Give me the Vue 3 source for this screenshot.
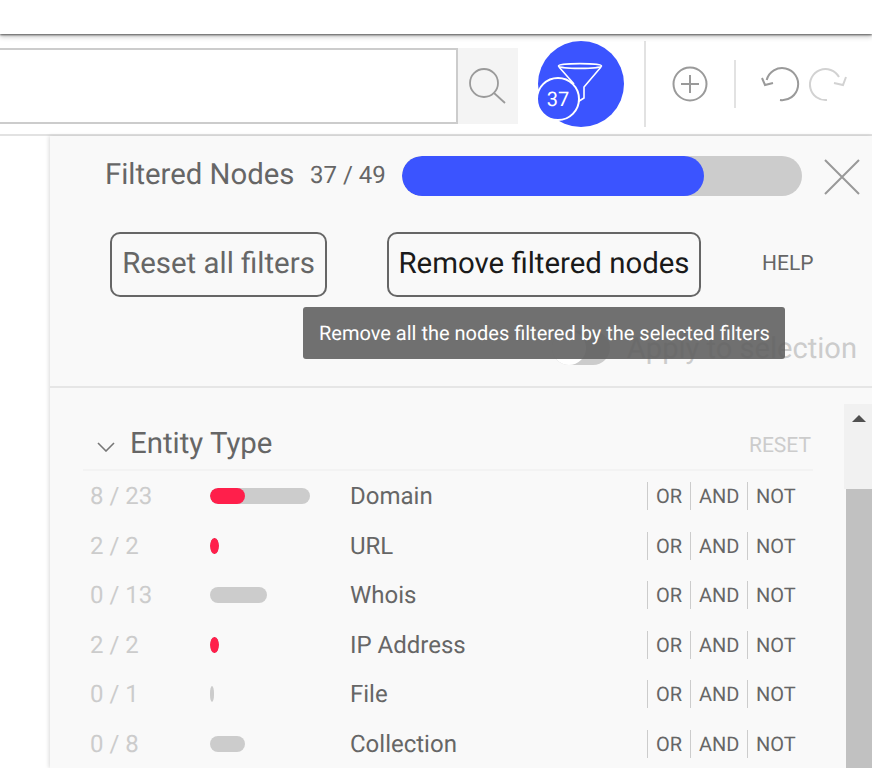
<script setup>
const rows = [
  { count: '8 / 23', total: 23, red: 8, label: 'Domain' },
  { count: '2 / 2', total: 2, red: 2, label: 'URL' },
  { count: '0 / 13', total: 13, red: 0, label: 'Whois' },
  { count: '2 / 2', total: 2, red: 2, label: 'IP Address' },
  { count: '0 / 1', total: 1, red: 0, label: 'File' },
  { count: '0 / 8', total: 8, red: 0, label: 'Collection' }
]
const unit = 100 / 23
</script>

<template>
  <div class="page">
    <div class="topbar"></div>
    <div class="toolbar">
      <div class="search-input"></div>
      <div class="search-btn">
        <svg width="40" height="40" viewBox="0 0 40 40" fill="none" stroke="#9a9a9a" stroke-width="1.8">
          <circle cx="16" cy="17" r="14" />
          <path d="M26 27 L37 37" />
        </svg>
      </div>
      <div class="filter-btn">
        <svg class="funnel" width="48" height="44" viewBox="0 0 48 44" fill="none" stroke="#fff" stroke-width="1.6" stroke-linejoin="round">
          <ellipse cx="24" cy="4" rx="21.5" ry="2.4" />
          <path d="M3 5 L18 22 M45 5 L28 25 L28 36 L20 41" />
        </svg>
        <div class="badge">37</div>
      </div>
      <div class="vline tall"></div>
      <svg class="plus" width="36" height="36" viewBox="0 0 36 36" fill="none" stroke="#9a9a9a" stroke-width="2">
        <circle cx="18" cy="18" r="16.5" />
        <path d="M18 9 V27 M9 18 H27" />
      </svg>
      <div class="vline short"></div>
      <svg class="undo" width="44" height="44" viewBox="0 0 44 44" fill="none" stroke="#9a9a9a" stroke-width="2">
        <path d="M6.7 18 A16 16 0 1 1 20 38" />
        <path d="M2 16 L5 23 L13 21" />
      </svg>
      <svg class="redo" width="44" height="44" viewBox="0 0 44 44" fill="none" stroke="#d2d2d2" stroke-width="2">
        <path d="M33 15 A15.5 15.5 0 1 0 21 38" />
        <path d="M40 15 L37 23 L28 21" />
      </svg>
    </div>

    <div class="panel">
      <div class="summary">
        <span class="title">Filtered Nodes</span>
        <span class="ratio">37 / 49</span>
        <div class="progress"><div class="progress-fill"></div></div>
        <svg class="close" width="36" height="36" viewBox="0 0 36 36" fill="none" stroke="#999" stroke-width="2">
          <path d="M1 1 L35 35 M35 1 L1 35" />
        </svg>
      </div>
      <div class="actions">
        <div class="btn reset">Reset all filters</div>
        <div class="btn remove">Remove filtered nodes</div>
        <span class="help">HELP</span>
      </div>
      <div class="apply">
        <div class="toggle"><div class="thumb"></div></div>
        <span class="apply-text">Apply to selection</span>
      </div>
      <div class="tooltip">Remove all the nodes filtered by the selected filters</div>

      <div class="lower">
        <div class="list">
          <div class="list-head">
            <svg class="chev" width="18" height="10" viewBox="0 0 18 10" fill="none" stroke="#777" stroke-width="1.6">
              <path d="M1 1 L9 9 L17 1" />
            </svg>
            <span class="list-title">Entity Type</span>
            <span class="list-reset">RESET</span>
          </div>
          <div v-for="row in rows" :key="row.label" class="row">
            <span class="count">{{ row.count }}</span>
            <div class="bar-cell">
              <div class="bar" :style="{ width: row.total * unit + 'px' }">
                <div class="bar-fill" :style="{ width: row.red * unit + 'px' }"></div>
              </div>
            </div>
            <span class="label">{{ row.label }}</span>
            <div class="ops">
              <span class="op op-or">OR</span>
              <span class="op op-and">AND</span>
              <span class="op op-not">NOT</span>
            </div>
          </div>
        </div>
        <div class="scrollbar">
          <div class="scroll-top"><div class="arrow"></div></div>
          <div class="scroll-thumb"></div>
        </div>
      </div>
    </div>
  </div>
</template>

<style scoped>
.page {
  height: 768px;
  overflow: hidden;
  background: #fff;
  font-family: Roboto, "Liberation Sans", sans-serif;
  text-rendering: geometricPrecision;
  display: flex;
  flex-direction: column;
}
.topbar {
  height: 34px;
  flex: none;
  background: #fff;
  box-shadow: 0 1px 2px rgba(0, 0, 0, 0.6), 0 3px 5px rgba(0, 0, 0, 0.2);
  position: relative;
  z-index: 1;
}
.toolbar {
  height: 100px;
  flex: none;
  display: flex;
  align-items: center;
  border-bottom: 2px solid #e2e2e2;
}
.search-input {
  width: 458px;
  height: 76px;
  box-sizing: border-box;
  border: 2px solid #ccc;
  border-left: none;
  background: #fff;
  margin-top: 4px;
}
.search-btn {
  width: 60px;
  height: 76px;
  margin-top: 4px;
  background: #f4f4f4;
  display: flex;
  align-items: center;
  justify-content: center;
}
.filter-btn {
  width: 86px;
  height: 86px;
  margin-left: 20px;
  position: relative;
  overflow: hidden;
}
.filter-btn::before {
  content: "";
  position: absolute;
  inset: 0;
  border-radius: 50%;
  background: #3b54ff;
}
.funnel {
  position: absolute;
  left: 18px;
  top: 21px;
}
.badge {
  position: absolute;
  left: -2px;
  top: 36px;
  width: 44px;
  height: 44px;
  box-sizing: border-box;
  border: 2px solid #fff;
  border-radius: 50%;
  background: #3b54ff;
  color: #fff;
  font-size: 20px;
  display: flex;
  align-items: center;
  justify-content: center;
}
.vline {
  width: 2px;
  background: #e2e2e2;
}
.tall {
  height: 86px;
  margin-left: 20px;
}
.short {
  height: 48px;
  margin-left: 26px;
}
.plus {
  margin-left: 26px;
}
.undo {
  margin-left: 24px;
}
.redo {
  margin-left: 2px;
}
.panel {
  flex: 1;
  min-height: 0;
  margin-left: 50px;
  background: #f9f9f9;
  box-shadow: -1px 0 4px rgba(0, 0, 0, 0.15);
  position: relative;
  display: flex;
  flex-direction: column;
}
.summary {
  height: 40px;
  margin-top: 20px;
  padding-left: 55px;
  display: flex;
  align-items: center;
  color: #666;
}
.title {
  font-size: 29.3px;
  width: 205px;
  flex: none;
  padding-bottom: 2px;
}
.ratio {
  font-size: 24px;
  width: 92px;
  flex: none;
  padding-bottom: 2px;
}
.progress {
  width: 400px;
  height: 40px;
  flex: none;
  border-radius: 20px;
  background: #ccc;
  overflow: hidden;
}
.progress-fill {
  width: 302px;
  height: 100%;
  border-radius: 20px;
  background: #3b54ff;
}
.close {
  margin-left: 22px;
  margin-top: 2px;
}
.actions {
  margin-top: 36px;
  padding-left: 60px;
  display: flex;
  align-items: center;
}
.btn {
  height: 65px;
  box-sizing: border-box;
  border: 2px solid #666;
  border-radius: 10px;
  font-size: 29.4px;
  padding-bottom: 2px;
  display: flex;
  align-items: center;
  justify-content: center;
}
.reset {
  width: 217px;
  color: #666;
}
.remove {
  width: 314px;
  margin-left: 60px;
  color: #1a1a1a;
}
.help {
  margin-left: 61px;
  font-size: 21px;
  color: #666;
  padding-bottom: 2px;
}
.apply {
  height: 34px;
  margin-top: 34px;
  padding-right: 15px;
  display: flex;
  align-items: center;
  justify-content: flex-end;
  gap: 17px;
}
.toggle {
  width: 58px;
  height: 34px;
  border-radius: 17px;
  background: #ccc;
  position: relative;
}
.thumb {
  width: 34px;
  height: 34px;
  border-radius: 50%;
  background: #fff;
}
.apply-text {
  font-size: 29.1px;
  padding-top: 2px;
  color: #ccc;
}
.tooltip {
  position: absolute;
  left: 253px;
  top: 171px;
  width: 482px;
  height: 52px;
  box-sizing: border-box;
  padding-left: 16px;
  border-radius: 3px;
  background: rgba(97, 97, 97, 0.9);
  color: #fff;
  font-size: 20px;
  display: flex;
  align-items: center;
}
.lower {
  flex: 1;
  min-height: 0;
  margin-top: 21px;
  border-top: 2px solid #e6e6e6;
  display: flex;
  justify-content: space-between;
}
.list {
  width: 730px;
  margin-left: 33px;
}
.list-head {
  height: 83.3px;
  box-sizing: border-box;
  padding-top: 38px;
  display: flex;
  align-items: flex-start;
  border-bottom: 2px solid #f3f3f3;
}
.chev {
  margin: 16px 0 0 14px;
  flex: none;
}
.list-title {
  margin-left: 15px;
  font-size: 29.4px;
  color: #666;
  line-height: 36px;
}
.list-reset {
  margin-left: auto;
  margin-right: 2px;
  font-size: 21px;
  line-height: 36px;
  padding-top: 2px;
  color: #ccc;
}
.row {
  height: 49.6px;
  display: flex;
  align-items: center;
}
.count {
  width: 127px;
  padding-left: 7px;
  box-sizing: border-box;
  font-size: 24px;
  color: #ccc;
  flex: none;
}
.bar-cell {
  width: 140px;
  flex: none;
}
.bar {
  height: 16px;
  border-radius: min(8px, 50%) / 50%;
  background: #ccc;
  overflow: hidden;
}
.bar-fill {
  height: 100%;
  border-radius: min(8px, 50%) / 50%;
  background: #ff1f4b;
}
.label {
  width: 297px;
  flex: none;
  font-size: 24px;
  color: #666;
}
.ops {
  display: flex;
  font-size: 20px;
  color: #666;
}
.op {
  height: 28px;
  border-left: 1px solid #ccc;
  display: flex;
  align-items: center;
  box-sizing: border-box;
  padding-left: 8px;
}
.op-or { width: 43px; }
.op-and { width: 57px; }
.op-not { width: 50px; }
.scrollbar {
  width: 28px;
  margin-top: 16px;
  display: flex;
  flex-direction: column;
  align-items: flex-end;
  background: #f9f9f9;
}
.scroll-top {
  width: 28px;
  height: 85px;
  background: #f1f1f1;
  flex: none;
  position: relative;
}
.arrow {
  width: 0;
  height: 0;
  margin: 11px 0 0 8px;
  border-left: 7px solid transparent;
  border-right: 7px solid transparent;
  border-bottom: 7px solid #505050;
}
.scroll-thumb {
  flex: 1;
  width: 26px;
  background: #c1c1c1;
}
</style>

<style>
html, body {
  margin: 0;
  overflow: hidden;
  background: #fff;
}
</style>
